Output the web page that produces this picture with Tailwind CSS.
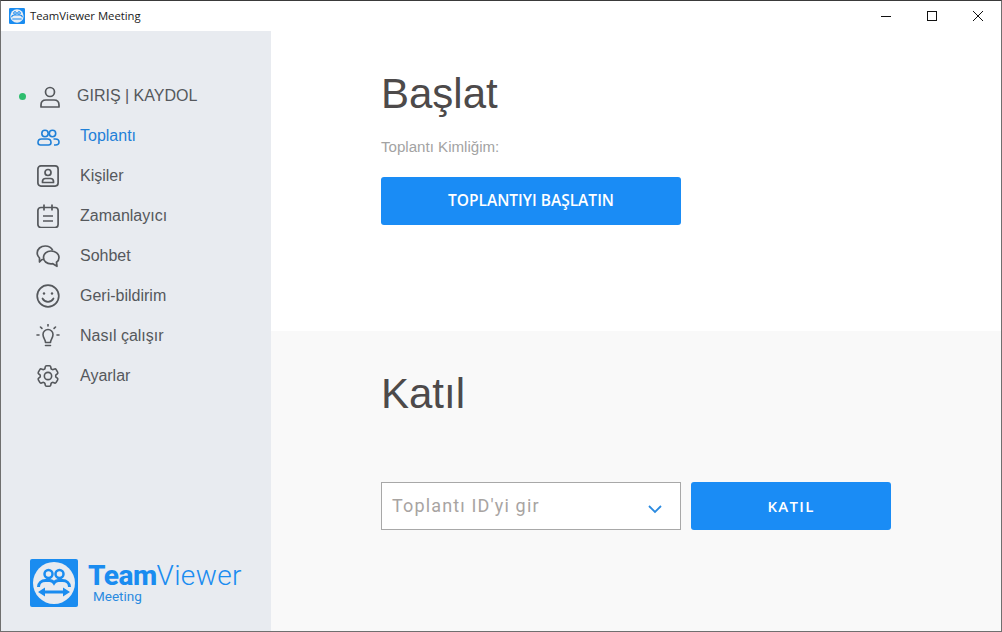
<!DOCTYPE html>
<html lang="tr">
<head>
    <meta charset="UTF-8">
    <title>TeamViewer Meeting</title>
    <script src="https://cdn.jsdelivr.net/npm/@tailwindcss/browser@4"></script>
</head>
<body class="bg-white">
    <div class="w-[1002px] h-[632px] flex flex-col overflow-hidden border border-t-[#3a3a3a] border-x-[#6f6f6f] border-b-[#6f6f6f] font-['Liberation_Sans',sans-serif]">
        <!-- Title bar -->
        <div class="h-[30px] shrink-0 flex items-center bg-white pl-2">
            <svg class="w-4 h-4" viewBox="0 0 48 48">
                <rect width="48" height="48" rx="4" fill="#1a8cf0"/>
                <circle cx="24" cy="24" r="20" fill="#e8edf3"/>
                <circle cx="18" cy="15" r="4" fill="none" stroke="#1a8cf0" stroke-width="3"/>
                <circle cx="30" cy="15" r="4" fill="none" stroke="#1a8cf0" stroke-width="3"/>
                <path d="M8 28c0-5 4-7 9-7h14c5 0 9 2 9 7M10 33h28" fill="none" stroke="#1a8cf0" stroke-width="3.500"/>
            </svg>
            <span class="ml-[5px] text-[11.300px] text-[#1a1a1a] font-['Open_Sans',sans-serif]">TeamViewer Meeting</span>
            <div class="ml-auto flex items-center">
                <div class="w-[46px] h-[30px] flex items-center justify-center">
                    <svg class="w-[12px] h-[12px]" viewBox="0 0 12 12"><path d="M1 6.500h10" stroke="#111" stroke-width="1"/></svg>
                </div>
                <div class="w-[46px] h-[30px] flex items-center justify-center">
                    <svg class="w-[12px] h-[12px]" viewBox="0 0 12 12"><rect x="1.500" y="1.500" width="9" height="9" fill="none" stroke="#111" stroke-width="1"/></svg>
                </div>
                <div class="w-[46px] h-[30px] flex items-center justify-center">
                    <svg class="w-[12px] h-[12px]" viewBox="0 0 12 12"><path d="M1 1l10 10M11 1L1 11" stroke="#111" stroke-width="1"/></svg>
                </div>
            </div>
        </div>

        <div class="flex-1 flex min-h-0">
            <!-- Sidebar -->
            <aside class="w-[270px] shrink-0 bg-[#e8ebf0] flex flex-col pt-[45px] text-[16px] text-[#55585c]">
                <div class="h-10 flex items-center pl-[18px]">
                    <span class="w-[7px] h-[7px] rounded-full bg-[#2ebd6e]"></span>
                    <svg class="w-6 h-6 ml-[12px]" viewBox="0 0 24 24" fill="none" stroke="#55585c" stroke-width="1.700">
                        <circle cx="12" cy="8" r="4.500"/>
                        <path d="M3 23v-2c0-3 2-5 5-5h8c3 0 5 2 5 5v2z" stroke-linejoin="round"/>
                    </svg>
                    <span class="ml-[15px]">GIRIŞ | KAYDOL</span>
                </div>
                <div class="h-10 flex items-center pl-[35px] text-[#1f80d8]">
                    <svg class="w-6 h-6" viewBox="0 0 24 24" fill="none" stroke="#1f80d8" stroke-width="1.600">
                        <circle cx="9" cy="9.500" r="3.200"/>
                        <circle cx="16.500" cy="9.500" r="3.200"/>
                        <path d="M2 18.500c0-2.300 1.500-3.500 3.500-3.500h6c2 0 3.500 1.200 3.500 3.500 0 1.500-1 2.500-2.500 2.500h-8C3 21 2 20 2 18.500z"/>
                        <path d="M17.500 15h2c2 0 3.500 1.200 3.500 3 0 1.800-1.500 3-3.500 3h-1.500"/>
                    </svg>
                    <span class="ml-[20px]">Toplantı</span>
                </div>
                <div class="h-10 flex items-center pl-[35px]">
                    <svg class="w-6 h-6" viewBox="0 0 24 24" fill="none" stroke="#55585c" stroke-width="1.700">
                        <rect x="1.900" y="1.900" width="20.200" height="20.200" rx="3"/>
                        <circle cx="12" cy="8.500" r="3"/>
                        <path d="M6.500 18.500v-1c0-2 1.200-3 3-3h5c1.800 0 3 1 3 3v1z" stroke-linejoin="round"/>
                    </svg>
                    <span class="ml-[20px]">Kişiler</span>
                </div>
                <div class="h-10 flex items-center pl-[35px]">
                    <svg class="w-6 h-6" viewBox="0 0 24 24" fill="none" stroke="#55585c" stroke-width="1.700">
                        <rect x="1.900" y="3.500" width="20.200" height="20" rx="3"/>
                        <path d="M8 .5v6M16 .5v6M7 12h10M7 17h10"/>
                    </svg>
                    <span class="ml-[20px]">Zamanlayıcı</span>
                </div>
                <div class="h-10 flex items-center pl-[35px]">
                    <svg class="w-6 h-6" viewBox="0 0 24 24" fill="none" stroke="#55585c" stroke-width="1.700" stroke-linejoin="round">
                        <path d="M8 15.500H6l-2.500 2.500v-4C2 12.500 1.200 11 1.200 9c0-4 3.500-7 8-7 3.500 0 6.300 1.700 7.500 4.300"/>
                        <path d="M15 7c4.500 0 8 2.800 8 6.500 0 2-.9 3.600-2.500 4.800l.5 4-4.200-2.600c-.6.100-1.200.2-1.800.2-4.400 0-7.500-2.900-7.500-6.400S10.600 7 15 7z"/>
                    </svg>
                    <span class="ml-[20px]">Sohbet</span>
                </div>
                <div class="h-10 flex items-center pl-[35px]">
                    <svg class="w-6 h-6" viewBox="0 0 24 24" fill="none" stroke="#55585c" stroke-width="1.700">
                        <circle cx="12" cy="12" r="10.800"/>
                        <circle cx="8" cy="9.500" r="1.200" fill="#55585c" stroke="none"/>
                        <circle cx="16" cy="9.500" r="1.200" fill="#55585c" stroke="none"/>
                        <path d="M6.500 14.500c1.300 2.300 3.200 3.300 5.500 3.300s4.200-1 5.500-3.300" stroke-linecap="round"/>
                    </svg>
                    <span class="ml-[20px]">Geri-bildirim</span>
                </div>
                <div class="h-10 flex items-center pl-[35px]">
                    <svg class="w-6 h-6" viewBox="0 0 24 24" fill="none" stroke="#55585c" stroke-width="1.600" stroke-linecap="round">
                        <path d="M9.500 18.500c0-3-2.500-4.500-2.500-8a5 5 0 0 1 10 0c0 3.500-2.500 5-2.500 8z" stroke-linejoin="round"/>
                        <path d="M9.500 21.500h5M12 .5v1.500M4.500 3l1.400 1.400M19.500 3l-1.400 1.400M1 11H3M21 11h2"/>
                    </svg>
                    <span class="ml-[20px]">Nasıl çalışır</span>
                </div>
                <div class="h-10 flex items-center pl-[35px]">
                    <svg class="w-6 h-6" viewBox="1.500 1.500 21 21" fill="none" stroke="#55585c" stroke-width="1.400" stroke-linejoin="round">
                        <circle cx="12" cy="12" r="3.200"/>
                        <path d="M9.594 3.940c.09-.542.56-.94 1.110-.94h2.593c.55 0 1.020.398 1.110.94l.213 1.281c.063.374.313.686.645.870.074.040.147.083.22.127.325.196.72.257 1.075.124l1.217-.456a1.125 1.125 0 0 1 1.370.49l1.296 2.247a1.125 1.125 0 0 1-.26 1.431l-1.003.827c-.293.241-.438.613-.43.992a7.723 7.723 0 0 1 0 .255c-.008.378.137.75.43.991l1.004.827c.424.35.534.955.26 1.430l-1.298 2.247a1.125 1.125 0 0 1-1.369.491l-1.217-.456c-.355-.133-.75-.072-1.076.124a6.470 6.470 0 0 1-.22.128c-.331.183-.581.495-.644.869l-.213 1.281c-.09.543-.56.94-1.110.94h-2.594c-.55 0-1.019-.398-1.110-.94l-.213-1.281c-.062-.374-.312-.686-.644-.87a6.520 6.520 0 0 1-.22-.127c-.325-.196-.72-.257-1.076-.124l-1.217.456a1.125 1.125 0 0 1-1.369-.49l-1.297-2.247a1.125 1.125 0 0 1 .26-1.431l1.004-.827c.292-.24.437-.613.43-.991a6.932 6.932 0 0 1 0-.255c.007-.38-.138-.751-.43-.992l-1.004-.827a1.125 1.125 0 0 1-.26-1.430l1.297-2.247a1.125 1.125 0 0 1 1.370-.491l1.216.456c.356.133.751.072 1.076-.124.072-.044.146-.086.22-.128.332-.183.582-.495.644-.869l.214-1.280z"/>
                    </svg>
                    <span class="ml-[20px]">Ayarlar</span>
                </div>

                <!-- Logo -->
                <div class="mt-auto mb-[24px] ml-[29px] flex items-start">
                    <svg class="w-12 h-12 shrink-0" viewBox="0 0 48 48">
                        <rect width="48" height="48" rx="2" fill="#1a8cf0"/>
                        <circle cx="24" cy="24" r="21" fill="#e8ebf0"/>
                        <circle cx="18.500" cy="15" r="4" fill="none" stroke="#1a8cf0" stroke-width="2.500"/>
                        <circle cx="29.500" cy="15" r="4" fill="none" stroke="#1a8cf0" stroke-width="2.500"/>
                        <path d="M8.500 28c0-4 3-6.500 7-6.500h4c2 0 3.500 1 4.500 2.500 1-1.500 2.500-2.500 4.500-2.500h4c4 0 7 2.500 7 6.500" fill="none" stroke="#1a8cf0" stroke-width="3"/>
                        <path d="M8 33l7-4.500v3h18v-3l7 4.500-7 4.500v-3H15v3z" fill="#1a8cf0"/>
                    </svg>
                    <div class="ml-[10px] mt-[3px]">
                        <div class="text-[28px] leading-[28px] text-[#1a8cf0] font-['Roboto',sans-serif] whitespace-nowrap"><span class="font-extrabold tracking-[-0.5px]">Team</span><span class="font-light tracking-[0.35px]">Viewer</span></div>
                        <div class="ml-[5px] text-[13.500px] leading-[12px] text-[#2a8ae0] font-['Roboto',sans-serif]">Meeting</div>
                    </div>
                </div>
            </aside>

            <main class="flex-1 flex flex-col">
                <!-- Start -->
                <section class="h-[300px] bg-white pl-[110px] pt-[36px]">
                    <h1 class="text-[42px] leading-[54px] text-[#4d4a4a]">Başlat</h1>
                    <p class="mt-[16px] text-[15.100px] leading-[20px] text-[#a3a3a3]">Toplantı Kimliğim:</p>
                    <button class="mt-[20px] w-[300px] h-[48px] rounded-[3px] bg-[#1a8cf5] text-white text-[15.500px] font-semibold font-['Open_Sans',sans-serif]">TOPLANTIYI BAŞLATIN</button>
                </section>
                <!-- Join -->
                <section class="flex-1 bg-[#f9f9f9] pl-[110px] pt-[36px]">
                    <h1 class="text-[42px] leading-[54px] text-[#4d4a4a]">Katıl</h1>
                    <div class="mt-[61px] flex gap-[10px]">
                        <div class="w-[300px] h-[48px] bg-white border border-[#a8a8a8] flex items-center pl-[10px] pr-[18px]">
                            <span class="text-[18px] tracking-[1.150px] text-[#a8a4a2] font-['Roboto',sans-serif] -mt-[1px]">Toplantı ID'yi gir</span>
                            <svg class="ml-auto mt-[6px] w-[14px] h-[9px]" viewBox="0 0 14 9" fill="none" stroke="#2a8ae0" stroke-width="1.800"><path d="M1 1l6 6 6-6"/></svg>
                        </div>
                        <button class="w-[200px] h-[48px] rounded-[3px] bg-[#1a8cf5] text-white text-[15px] font-semibold tracking-[1.300px] font-['Open_Sans',sans-serif]">KATIL</button>
                    </div>
                </section>
            </main>
        </div>
    </div>
</body>
</html>
